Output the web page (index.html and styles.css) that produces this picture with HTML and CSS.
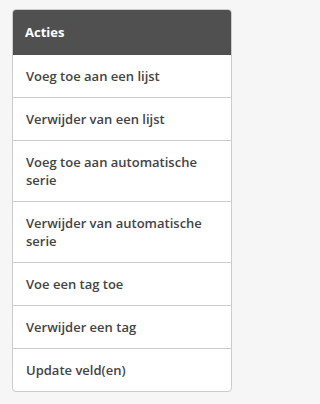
FILE: index.html
```html
<!DOCTYPE html>
<html>
<head>
<meta charset="utf-8">
<link rel="stylesheet" href="styles.css">
</head>
<body>
<div class="card">
  <div class="card-header">Acties</div>
  <ul class="actions">
    <li class="action">Voeg toe aan een lijst</li>
    <li class="action">Verwijder van een lijst</li>
    <li class="action">Voeg toe aan automatische serie</li>
    <li class="action">Verwijder van automatische serie</li>
    <li class="action">Voe een tag toe</li>
    <li class="action">Verwijder een tag</li>
    <li class="action">Update veld(en)</li>
  </ul>
</div>
</body>
</html>
```
FILE: styles.css
```css
html, body {
  margin: 0;
  padding: 0;
  background: #f6f6f6;
}
body {
  padding: 9px 12px;
  font-family: "Open Sans", "Liberation Sans", sans-serif;
}
.card {
  width: 220px;
  box-sizing: border-box;
  background: #fff;
  border: 1px solid #cccccc;
  border-radius: 4px;
  overflow: hidden;
}
.card-header {
  background: #505050;
  color: #fff;
  font-weight: 700;
  font-size: 13px;
  line-height: 18px;
  padding: 14px 13px;
  margin: -1px -1px 0;
}
.actions {
  list-style: none;
  margin: 0;
  padding: 0;
}
.action {
  color: #444;
  font-weight: 600;
  font-size: 13px;
  line-height: 18px;
  padding: 12px 13px;
  border-top: 1px solid #cccccc;
}
.action:first-child {
  border-top: none;
}
```
